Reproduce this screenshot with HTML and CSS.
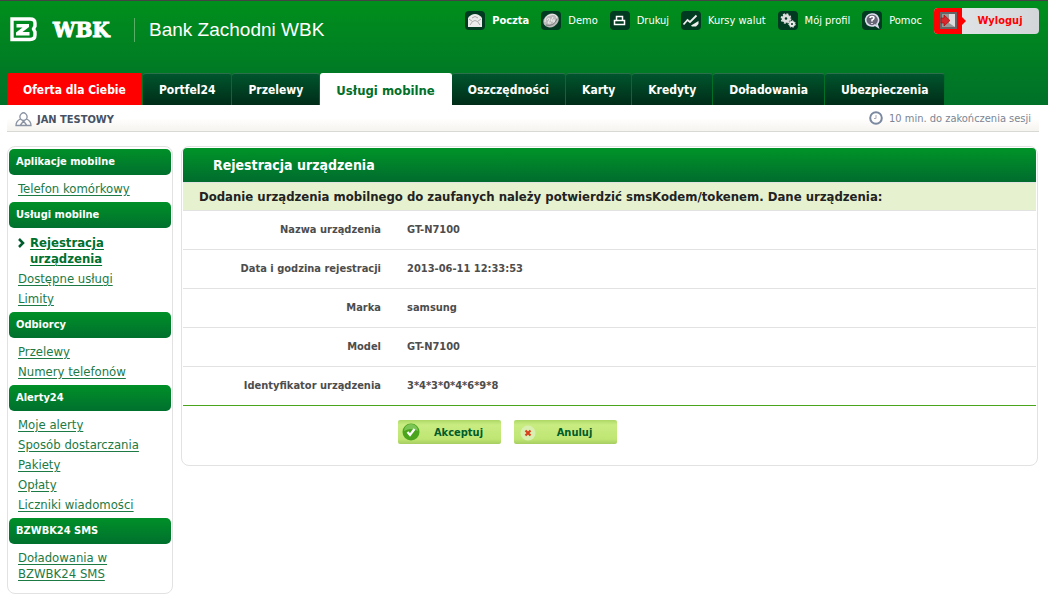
FILE: index.html
```html
<!DOCTYPE html>
<html lang="pl">
<head>
<meta charset="utf-8">
<title>Bank Zachodni WBK</title>
<link rel="stylesheet" href="styles.css">
</head>
<body>
<header class="header">
  <div class="top">
    <a class="brand" href="#">
      <svg class="emblem" viewBox="0 0 27 25" width="27" height="25" aria-hidden="true">
        <path d="M2 2H20Q25 2 25 6V9L23.500 12L25 15V18Q25 22.500 20 22.500H2Z" fill="none" stroke="#fff" stroke-width="3.400"/>
        <path d="M6.500 7H19V10L12.500 15H19.500V18.500H6V15.500L12.500 10.500H6.500Z" fill="#fff"/>
      </svg>
      <span class="wbk">WBK</span>
      <span class="brand-name">Bank Zachodni WBK</span>
    </a>
    <nav class="tools" aria-label="Narzędzia">
      <a class="tool tool-strong" href="#"><svg viewBox="0 0 20 20" width="20" height="20"><rect width="20" height="19" rx="4" fill="#003a20"/><path d="M3 7Q6 3 10 3Q14 3 17 7V16H3Z" fill="#ececec"/><path d="M4 8L7.500 10.500Q10 8.500 12.500 10.500L16 8M7.500 10.500L5 14M12.500 10.500L15 14M7 7Q10 4 13 7" fill="none" stroke="#aaa"/></svg>Poczta</a>
      <a class="tool" href="#"><svg viewBox="0 0 20 20" width="20" height="20"><rect width="20" height="19" rx="4" fill="#003a20"/><ellipse cx="10" cy="9.500" rx="8" ry="6.500" fill="#bbb" transform="rotate(-30 10 9.500)"/><path d="M4 11Q4 5 9 4Q15 2 16 7M6 9Q7 6 9 8L7 12H10M12 6L10 10H14M13 8V12" fill="none" stroke="#eee"/><path d="M5 14Q13 16 16 8" fill="none" stroke="#777"/></svg>Demo</a>
      <a class="tool" href="#"><svg viewBox="0 0 20 20" width="20" height="20"><rect width="20" height="19" rx="4" fill="#003a20"/><path d="M6.500 9V5.500H12.500V9M4.500 9.500H14.500V13.500H4.500Z" fill="none" stroke="#fff" stroke-width="1.500"/></svg>Drukuj</a>
      <a class="tool" href="#"><svg viewBox="0 0 20 20" width="20" height="20"><rect width="20" height="19" rx="4" fill="#003a20"/><path d="M2.500 13.500L6.500 9L9 11L15.500 4.500" fill="none" stroke="#eee" stroke-width="1.800"/><path d="M10 14.500L17.500 10V13L15 15.500H11Z" fill="#eee"/></svg>Kursy walut</a>
      <a class="tool" href="#"><svg viewBox="0 0 20 20" width="20" height="20"><rect width="20" height="19" rx="4" fill="#003a20"/><circle cx="8" cy="7.500" r="2.800" fill="none" stroke="#ddd" stroke-width="3"/><circle cx="8" cy="7.500" r="4.600" fill="none" stroke="#ddd" stroke-width="1.500" stroke-dasharray="2 1.600"/><circle cx="14" cy="13" r="2" fill="none" stroke="#eee" stroke-width="2"/><circle cx="14" cy="13" r="3.300" fill="none" stroke="#eee" stroke-dasharray="1.500 1.500"/></svg>Mój profil</a>
      <a class="tool" href="#"><svg viewBox="0 0 20 20" width="20" height="20"><rect width="20" height="19" rx="4" fill="#003a20"/><path d="M10 3A6 6 0 1 0 13 14L16 16L15 13A6 6 0 0 0 10 3Z" fill="#667" stroke="#dde" stroke-width="1.600"/><path d="M8 7Q8 5.500 10 5.500Q12 5.500 12 7Q12 8 10 9V10.500M10 12V13" fill="none" stroke="#fff" stroke-width="1.500"/></svg>Pomoc</a>
      <a class="logout" href="#"><svg viewBox="0 0 32 26" width="32" height="26"><path d="M4 0H28V9L32 13L28 17V26H4Q0 26 0 22V4Q0 0 4 0Z" fill="#f00"/><path d="M6 4H23V21H6Z" fill="#666"/><path d="M8 6H21V19H8Z" fill="#999"/><path d="M15 6H21V19L15 15Z" fill="#ddd"/><path d="M7 10H10V7L16 12.500L10 18V15H7Z" fill="#d9272d" stroke="#a00" stroke-width=".6"/></svg><span>Wyloguj</span></a>
    </nav>
  </div>
  <nav class="tabs" aria-label="Menu">
    <a class="tab tab-offer" href="#">Oferta dla Ciebie</a>
    <a class="tab" href="#">Portfel24</a>
    <a class="tab" href="#">Przelewy</a>
    <a class="tab tab-active" href="#">Usługi mobilne</a>
    <a class="tab" href="#">Oszczędności</a>
    <a class="tab" href="#">Karty</a>
    <a class="tab" href="#">Kredyty</a>
    <a class="tab" href="#">Doładowania</a>
    <a class="tab" href="#">Ubezpieczenia</a>
  </nav>
</header>
<div class="status">
  <span class="user"><svg viewBox="0 0 18 16" width="18" height="16"><path d="M5.500 7A3.500 4 0 1 1 11.500 7Q16 9 16 13.500H1Q1 9 5.500 7Q8.500 10 11.500 7M8.500 9L5.500 13M8.500 9L11.500 13" fill="none" stroke="#8a93a3" stroke-width="1.300"/></svg>JAN TESTOWY</span>
  <span class="session"><svg viewBox="0 0 14 14" width="14" height="14"><circle cx="7" cy="7" r="5.800" fill="none" stroke="#7a88a0" stroke-width="2"/><path d="M7 4V7.500H5" fill="none" stroke="#aab" /></svg>10 min. do zakończenia sesji</span>
</div>
<div class="content">
  <aside class="side">
    <h2 class="side-title">Aplikacje mobilne</h2>
    <ul class="links"><li><a href="#">Telefon komórkowy</a></li></ul>
    <h2 class="side-title">Usługi mobilne</h2>
    <ul class="links">
      <li class="current"><svg viewBox="0 0 8 10" width="8" height="10"><path d="M1 1L5 5L1 9" fill="none" stroke="#005c2c" stroke-width="2.500"/></svg><a href="#">Rejestracja urządzenia</a></li>
      <li><a href="#">Dostępne usługi</a></li>
      <li><a href="#">Limity</a></li>
    </ul>
    <h2 class="side-title">Odbiorcy</h2>
    <ul class="links"><li><a href="#">Przelewy</a></li><li><a href="#">Numery telefonów</a></li></ul>
    <h2 class="side-title">Alerty24</h2>
    <ul class="links">
      <li><a href="#">Moje alerty</a></li><li><a href="#">Sposób dostarczania</a></li><li><a href="#">Pakiety</a></li><li><a href="#">Opłaty</a></li><li><a href="#">Liczniki wiadomości</a></li>
    </ul>
    <h2 class="side-title">BZWBK24 SMS</h2>
    <ul class="links"><li class="wrap"><a href="#">Doładowania w BZWBK24 SMS</a></li></ul>
  </aside>
  <main class="panel">
    <h1 class="panel-title">Rejestracja urządzenia</h1>
    <p class="lead">Dodanie urządzenia mobilnego do zaufanych należy potwierdzić smsKodem/tokenem. Dane urządzenia:</p>
    <table class="details">
      <tr><th scope="row">Nazwa urządzenia</th><td>GT-N7100</td></tr>
      <tr><th scope="row">Data i godzina rejestracji</th><td>2013-06-11 12:33:53</td></tr>
      <tr><th scope="row">Marka</th><td>samsung</td></tr>
      <tr><th scope="row">Model</th><td>GT-N7100</td></tr>
      <tr><th scope="row">Identyfikator urządzenia</th><td>3*4*3*0*4*6*9*8</td></tr>
    </table>
    <div class="actions">
      <button class="btn" type="button"><svg viewBox="0 0 18 18" width="18" height="18"><circle cx="9" cy="9" r="8.500" fill="#4aa51d"/><path d="M2 8A7 7 0 0 1 16 8Q9 4 2 8Z" fill="#7cc455"/><path d="M5.500 9L8 12L12.500 6" fill="none" stroke="#fff" stroke-width="2.200"/></svg><span>Akceptuj</span></button>
      <button class="btn" type="button"><svg viewBox="0 0 18 18" width="18" height="18"><circle cx="10" cy="10" r="7.500" fill="#d9efb0"/><path d="M7.500 7.500L12.500 12.500M12.500 7.500L7.500 12.500" stroke="#d8401c" stroke-width="2.200"/></svg><span>Anuluj</span></button>
    </div>
  </main>
</div>
</body>
</html>
```
FILE: styles.css
```css
* { box-sizing: border-box; }
body {
  margin: 0;
  background: #fff;
  font-family: "DejaVu Sans Condensed", Tahoma, sans-serif;
  font-size: 12px;
  color: #4d4d4d;
}
svg { flex: none; display: block; }
.header {
  display: flex;
  flex-direction: column;
  justify-content: space-between;
  height: 105px;
  border-top: 1px solid #444;
  background: linear-gradient(#008f1c, #007029);
}
.top {
  display: flex;
  justify-content: space-between;
  align-items: flex-start;
  padding: 7px 9px 0 10px;
}
.brand {
  display: flex;
  align-items: center;
  margin-top: 9px;
  color: #fff;
  text-decoration: none;
}
.wbk {
  width: 98px;
  padding-left: 16px;
  border-right: 1px solid #58ae66;
  font: bold 20px/24px "DejaVu Serif", serif;
  -webkit-text-stroke: 1px #fff;
}
.brand-name { padding-left: 14px; font: 19px/24px "Liberation Sans", Arial, sans-serif; }
.tools { display: flex; align-items: center; gap: 12px; font-size: 11px; line-height: 26px; }
.tool { display: flex; align-items: center; gap: 7px; color: #fff; text-decoration: none; }
.tool-strong { font-weight: bold; }
.logout {
  display: flex;
  width: 105px;
  border-radius: 4px;
  background: linear-gradient(100deg, #e4e7e9, #d3d6d9);
  color: #f00;
  font-weight: bold;
  text-decoration: none;
}
.logout span { flex: 1; padding-right: 5px; text-align: center; }
.tabs { display: flex; padding-left: 7px; }
.tab {
  height: 32px;
  padding: 0 16px;
  border-top: 1px solid #2b6f4c;
  border-right: 1px solid #007028;
  border-radius: 3px 3px 0 0;
  background: linear-gradient(#00552d, #002c18);
  color: #fff;
  font-size: 12px;
  font-weight: bold;
  line-height: 33px;
  white-space: nowrap;
  text-decoration: none;
}
.tab-offer { border-top-color: #f00; background: #f00; }
.tab-active { border-color: #fff; background: #fff; color: #00702a; font-size: 13px; }
.status {
  display: flex;
  justify-content: space-between;
  align-items: center;
  height: 27px;
  margin: 0 9px 0 7px;
  padding: 0 8px;
  border-bottom: 1px solid #d8d8d4;
  background: linear-gradient(#fff 50%, #f6f4ef);
  font-size: 11px;
}
.user, .session { display: flex; align-items: center; gap: 4px; height: 27px; }
.user { padding-top: 3px; color: #465264; font-weight: bold; }
.session { gap: 6px; color: #7b8594; }
.content { display: flex; align-items: flex-start; gap: 8px; padding: 14px 10px 10px 7px; }
.side {
  flex: none;
  width: 166px;
  padding: 2px 1px 8px;
  border: 1px solid #e2e2e2;
  border-radius: 8px;
}
.side-title {
  margin: 0;
  padding-left: 7px;
  border-radius: 5px;
  background: linear-gradient(#009028, #00702e);
  color: #fff;
  font-size: 11px;
  line-height: 26px;
}
.links { margin: 0; padding: 4px 9px 3px; list-style: none; font-size: 13px; line-height: 20px; }
.links a { color: #1c7a45; text-underline-offset: 2px; }
.links .current a { color: #00702e; }
.current { display: flex; gap: 4px; padding: 3px 0 2px; font-weight: bold; line-height: 16px; }
.current svg { margin-top: 3px; }
.wrap { padding-top: 2px; line-height: 16px; }
.panel {
  flex: 1;
  padding: 1px 1px 21px;
  border: 1px solid #e2e2e2;
  border-radius: 8px;
}
.panel-title {
  margin: 0;
  padding-left: 30px;
  border-radius: 4px 4px 0 0;
  background: linear-gradient(#009428, #006c2e);
  color: #fff;
  font-size: 14px;
  line-height: 34px;
}
.lead {
  margin: 0;
  padding-left: 16px;
  border-top: 1px solid #e2e2e2;
  border-bottom: 1px solid #e2e2e2;
  background: #e6f1d0;
  color: #222;
  font-size: 13px;
  font-weight: bold;
  line-height: 27px;
}
.details { width: 100%; border-collapse: separate; border-spacing: 0; font-size: 11px; font-weight: bold; line-height: 14px; }
.details th, .details td { height: 39px; padding: 0; border-bottom: 1px solid #e2e2e2; }
.details th { width: 198px; text-align: right; }
.details td { padding-left: 26px; }
.details tr:last-child th, .details tr:last-child td { border-bottom-color: #4aa51d; }
.actions { display: flex; gap: 13px; padding: 14px 0 0 215px; }
.btn {
  display: flex;
  align-items: center;
  width: 103px;
  height: 24px;
  padding: 0 4px;
  border: 0;
  border-radius: 2px;
  background: linear-gradient(#acd866, #c9ec82 20%, #bfe673 80%, #a5cd61);
  color: #005c2c;
  font-family: inherit;
  font-size: 11px;
  font-weight: bold;
}
.btn span { flex: 1; text-align: center; }
```
